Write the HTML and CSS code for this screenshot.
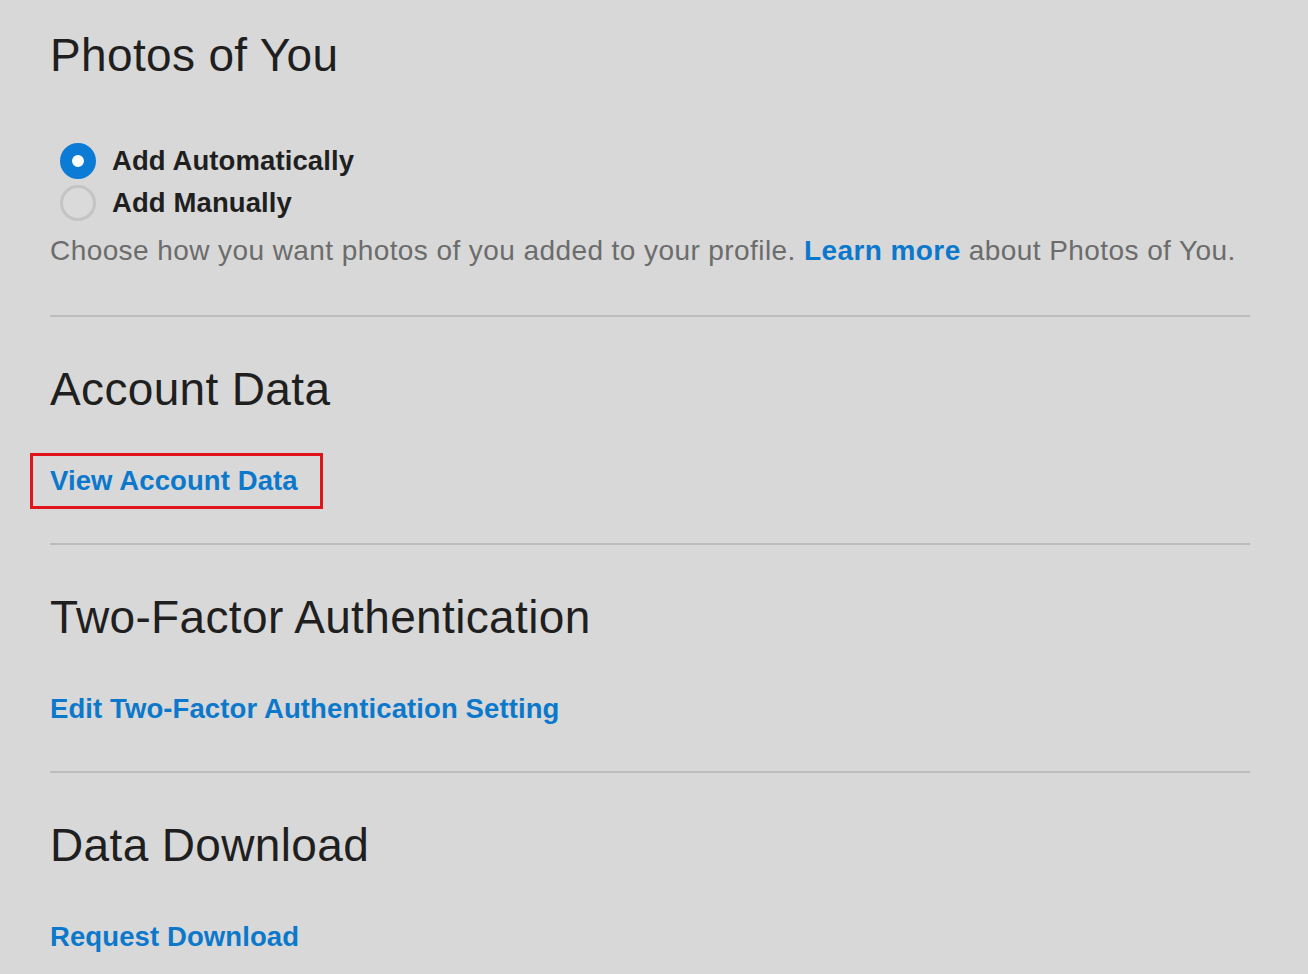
FILE: index.html
```html
<!DOCTYPE html>
<html lang="en">
<head>
<meta charset="utf-8">
<title>Settings</title>
<link rel="stylesheet" href="styles.css">
</head>
<body>
<main class="page">
  <section class="section first">
    <h2 class="title">Photos of You</h2>
    <div class="options">
      <label class="option"><span class="radio checked"></span><span>Add Automatically</span></label>
      <label class="option"><span class="radio"></span><span>Add Manually</span></label>
    </div>
    <p class="desc">Choose how you want photos of you added to your profile. <a class="inline-link" href="#">Learn more</a> about Photos of You.</p>
  </section>
  <section class="section">
    <h2 class="title">Account Data</h2>
    <a class="link highlighted" href="#">View Account Data</a>
  </section>
  <section class="section">
    <h2 class="title">Two-Factor Authentication</h2>
    <a class="link" href="#">Edit Two-Factor Authentication Setting</a>
  </section>
  <section class="section last">
    <h2 class="title">Data Download</h2>
    <a class="link" href="#">Request Download</a>
  </section>
</main>
</body>
</html>
```
FILE: styles.css
```css
html, body {
  margin: 0;
  padding: 0;
  background: #d8d8d8;
}
body {
  font-family: "Liberation Sans", Arial, sans-serif;
  color: #1f1f1f;
}
.page {
  padding: 0 58px 0 50px;
}
.section {
  border-top: 2px solid #bcbcbc;
  padding: 44px 0 42px;
  display: flex;
  flex-direction: column;
  align-items: flex-start;
}
.section.first {
  border-top: none;
  padding: 27px 0 46px;
}
.title {
  margin: 0;
  font-size: 46px;
  line-height: 56px;
  font-weight: 400;
  letter-spacing: 0.35px;
  color: #1f1f1f;
}
.options {
  margin-top: 57px;
  display: flex;
  flex-direction: column;
  margin-left: 10px;
}
.option {
  display: flex;
  align-items: center;
  gap: 16px;
  height: 42px;
  font-size: 27.5px;
  font-weight: 700;
  letter-spacing: 0.1px;
  color: #1f1f1f;
}
.radio {
  width: 36px;
  height: 36px;
  border-radius: 50%;
  box-sizing: border-box;
  border: 3px solid #c4c4c4;
  background: #dadada;
}
.radio.checked {
  border: 12px solid #0b7bd6;
  background: #ffffff;
}
.desc {
  margin: 9px 0 0;
  font-size: 28px;
  line-height: 36px;
  letter-spacing: 0.42px;
  color: #6c6c6c;
}
.inline-link {
  color: #0b78cc;
  text-decoration: none;
  font-weight: 700;
}
.link {
  margin-top: 44px;
  font-size: 27.5px;
  line-height: 40px;
  color: #0b78cc;
  text-decoration: none;
  font-weight: 700;
  letter-spacing: 0.1px;
}
.link.highlighted {
  position: relative;
}
.link.highlighted::after {
  content: "";
  position: absolute;
  left: -20px;
  right: -25px;
  top: -8px;
  bottom: -8px;
  border: 3px solid #e2141b;
}
```
